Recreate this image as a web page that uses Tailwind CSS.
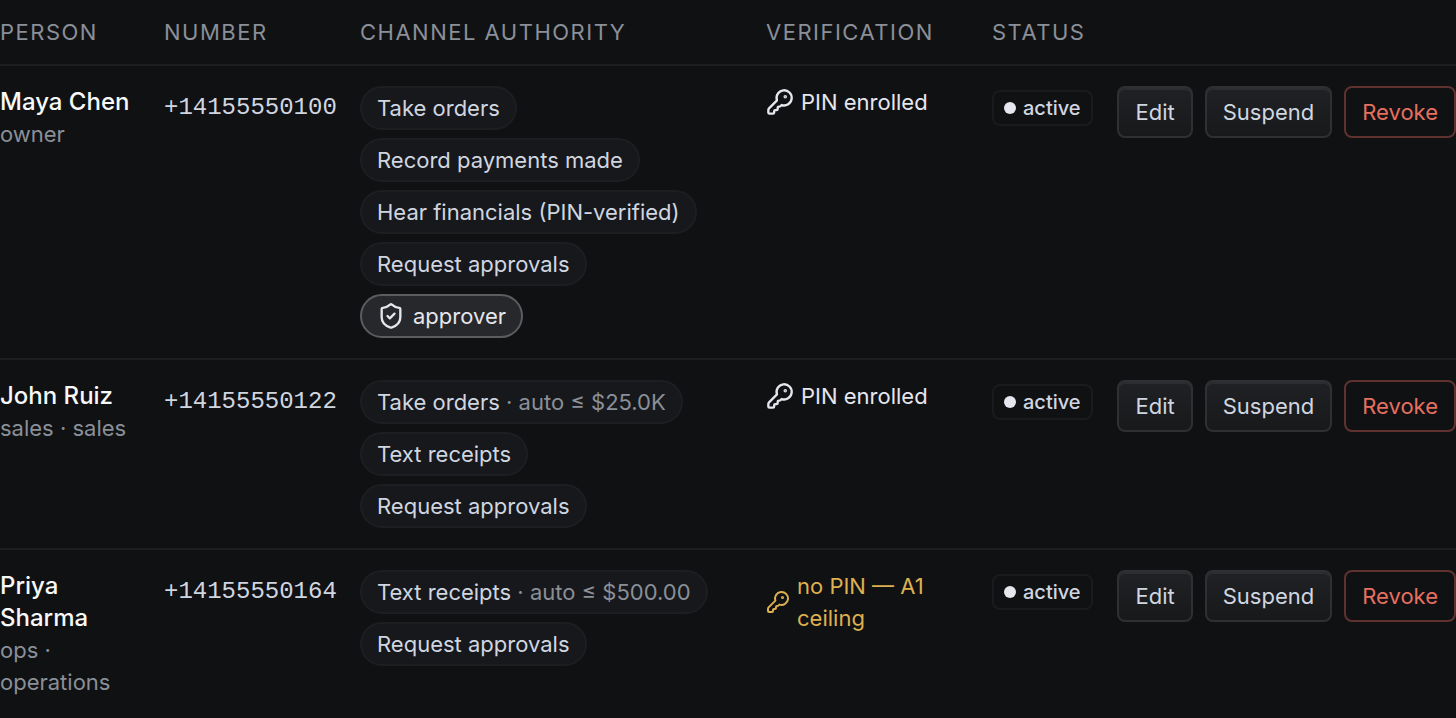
<!DOCTYPE html>
<html lang="en">
<head>
  <meta charset="UTF-8">
  <meta name="viewport" content="width=device-width, initial-scale=1.0">
  <title>People</title>
  <script src="https://cdn.jsdelivr.net/npm/@tailwindcss/browser@4"></script>
</head>
<body class="bg-[#101113] font-['Inter',sans-serif] text-[22px] leading-8 text-[#d0d6e0] overflow-x-hidden">
  <svg class="hidden">
    <symbol id="key" viewBox="0 0 24 24" fill="none" stroke="currentColor" stroke-width="2" stroke-linecap="round" stroke-linejoin="round">
      <path d="M2.586 17.414A2 2 0 0 0 2 18.828V21a1 1 0 0 0 1 1h3a1 1 0 0 0 1-1v-1a1 1 0 0 1 1-1h1a1 1 0 0 0 1-1v-1a1 1 0 0 1 1-1h.172a2 2 0 0 0 1.414-.586l.814-.814a6.5 6.5 0 1 0-4-4z"/>
      <circle cx="16.5" cy="7.5" r=".5" fill="currentColor"/>
    </symbol>
    <symbol id="shield" viewBox="0 0 24 24" fill="none" stroke="currentColor" stroke-width="2" stroke-linecap="round" stroke-linejoin="round">
      <path d="M20 13c0 5-3.5 7.5-7.66 8.95a1 1 0 0 1-.67-.01C7.5 20.5 4 18 4 13V6a1 1 0 0 1 1-1c2 0 4.500-1.200 6.240-2.720a1.170 1.170 0 0 1 1.520 0C14.510 3.810 17 5 19 5a1 1 0 0 1 1 1z"/>
      <path d="m9 12 2 2 4-4"/>
    </symbol>
  </svg>

  <table class="w-full table-fixed border-collapse text-left align-top">
    <colgroup>
      <col class="w-[164px]">
      <col class="w-[196px]">
      <col>
      <col class="w-[226px]">
      <col class="w-[126px]">
      <col class="w-[338px]">
    </colgroup>
    <thead class="text-[#8a8f98] uppercase tracking-[1.5px]">
      <tr class="h-[65px] border-b-2 border-[#1d1e21]">
        <th class="p-0 font-normal">Person</th>
        <th class="p-0 font-normal">Number</th>
        <th class="p-0 font-normal">Channel authority</th>
        <th class="p-0 font-normal">Verification</th>
        <th class="p-0 font-normal">Status</th>
        <th class="p-0" aria-label="Actions"></th>
      </tr>
    </thead>
    <tbody class="align-top">
      <tr class="border-b-2 border-[#1d1e21]">
        <td class="py-5 pr-6"><div class="text-2xl leading-8 font-medium text-[#f7f8f8]">Maya Chen</div><div class="text-[#8a8f98]">owner</div></td>
        <td class="py-5"><div class="font-['Liberation_Mono',monospace] text-2xl leading-11">+14155550100</div></td>
        <td class="py-5">
          <ul class="flex flex-col items-start gap-2">
            <li class="h-11 rounded-full border-2 border-[#1d1e21] bg-[#17181b] px-[15px] leading-10">Take orders</li>
            <li class="h-11 rounded-full border-2 border-[#1d1e21] bg-[#17181b] px-[15px] leading-10">Record payments made</li>
            <li class="h-11 rounded-full border-2 border-[#1d1e21] bg-[#17181b] px-[15px] leading-10">Hear financials (PIN-verified)</li>
            <li class="h-11 rounded-full border-2 border-[#1d1e21] bg-[#17181b] px-[15px] leading-10">Request approvals</li>
            <li class="flex h-11 items-center gap-2 rounded-full border-2 border-[#5c5d60] bg-[#27282b] px-[15px] text-[#e6e6ee]"><svg class="size-7"><use href="#shield"/></svg>approver</li>
          </ul>
        </td>
        <td class="py-5 text-[#e6e6ee]"><div class="flex items-center gap-[7px]"><svg class="size-7"><use href="#key"/></svg>PIN enrolled</div></td>
        <td class="py-5"><span class="mt-1 inline-flex h-9 items-center gap-[7px] rounded-lg border-2 border-[#1a1b1e] px-[10px] text-xl font-medium"><span class="size-3 rounded-full bg-[#e6e6ee]"></span>active</span></td>
        <td class="py-5">
          <div class="flex justify-end gap-3">
            <button class="h-[52px] rounded-lg border-2 border-[#2f3033] bg-linear-to-b from-[#202124] to-[#18191b] px-4 inset-shadow-[0_2px_0_#2c2d30]">Edit</button>
            <button class="h-[52px] rounded-lg border-2 border-[#2f3033] bg-linear-to-b from-[#202124] to-[#18191b] px-4 inset-shadow-[0_2px_0_#2c2d30]">Suspend</button>
            <button class="h-[52px] rounded-lg border-2 border-[#5f322f] px-4 text-[#e5705f]">Revoke</button>
          </div>
        </td>
      </tr>
      <tr class="border-b-2 border-[#1d1e21]">
        <td class="py-5 pr-6"><div class="text-2xl leading-8 font-medium text-[#f7f8f8]">John Ruiz</div><div class="text-[#8a8f98]">sales · sales</div></td>
        <td class="py-5"><div class="font-['Liberation_Mono',monospace] text-2xl leading-11">+14155550122</div></td>
        <td class="py-5">
          <ul class="flex flex-col items-start gap-2">
            <li class="h-11 rounded-full border-2 border-[#1d1e21] bg-[#17181b] px-[15px] leading-10">Take orders<span class="text-[#8a8f98]"> · auto ≤ $25.0K</span></li>
            <li class="h-11 rounded-full border-2 border-[#1d1e21] bg-[#17181b] px-[15px] leading-10">Text receipts</li>
            <li class="h-11 rounded-full border-2 border-[#1d1e21] bg-[#17181b] px-[15px] leading-10">Request approvals</li>
          </ul>
        </td>
        <td class="py-5 text-[#e6e6ee]"><div class="flex items-center gap-[7px]"><svg class="size-7"><use href="#key"/></svg>PIN enrolled</div></td>
        <td class="py-5"><span class="mt-1 inline-flex h-9 items-center gap-[7px] rounded-lg border-2 border-[#1a1b1e] px-[10px] text-xl font-medium"><span class="size-3 rounded-full bg-[#e6e6ee]"></span>active</span></td>
        <td class="py-5">
          <div class="flex justify-end gap-3">
            <button class="h-[52px] rounded-lg border-2 border-[#2f3033] bg-linear-to-b from-[#202124] to-[#18191b] px-4 inset-shadow-[0_2px_0_#2c2d30]">Edit</button>
            <button class="h-[52px] rounded-lg border-2 border-[#2f3033] bg-linear-to-b from-[#202124] to-[#18191b] px-4 inset-shadow-[0_2px_0_#2c2d30]">Suspend</button>
            <button class="h-[52px] rounded-lg border-2 border-[#5f322f] px-4 text-[#e5705f]">Revoke</button>
          </div>
        </td>
      </tr>
      <tr>
        <td class="pt-5 pr-6 pb-4"><div class="text-2xl leading-8 font-medium text-[#f7f8f8]">Priya Sharma</div><div class="text-[#8a8f98]">ops · operations</div></td>
        <td class="pt-5"><div class="font-['Liberation_Mono',monospace] text-2xl leading-11">+14155550164</div></td>
        <td class="pt-5">
          <ul class="flex flex-col items-start gap-2">
            <li class="h-11 rounded-full border-2 border-[#1d1e21] bg-[#17181b] px-[15px] leading-10">Text receipts<span class="text-[#8a8f98]"> · auto ≤ $500.00</span></li>
            <li class="h-11 rounded-full border-2 border-[#1d1e21] bg-[#17181b] px-[15px] leading-10">Request approvals</li>
          </ul>
        </td>
        <td class="pt-5 pr-10 text-[#deb04f]"><div class="flex items-center gap-[7px]"><svg class="size-6 shrink-0"><use href="#key"/></svg>no PIN — A1 ceiling</div></td>
        <td class="pt-5"><span class="mt-1 inline-flex h-9 items-center gap-[7px] rounded-lg border-2 border-[#1a1b1e] px-[10px] text-xl font-medium"><span class="size-3 rounded-full bg-[#e6e6ee]"></span>active</span></td>
        <td class="pt-5">
          <div class="flex justify-end gap-3">
            <button class="h-[52px] rounded-lg border-2 border-[#2f3033] bg-linear-to-b from-[#202124] to-[#18191b] px-4 inset-shadow-[0_2px_0_#2c2d30]">Edit</button>
            <button class="h-[52px] rounded-lg border-2 border-[#2f3033] bg-linear-to-b from-[#202124] to-[#18191b] px-4 inset-shadow-[0_2px_0_#2c2d30]">Suspend</button>
            <button class="h-[52px] rounded-lg border-2 border-[#5f322f] px-4 text-[#e5705f]">Revoke</button>
          </div>
        </td>
      </tr>
    </tbody>
  </table>
</body>
</html>
